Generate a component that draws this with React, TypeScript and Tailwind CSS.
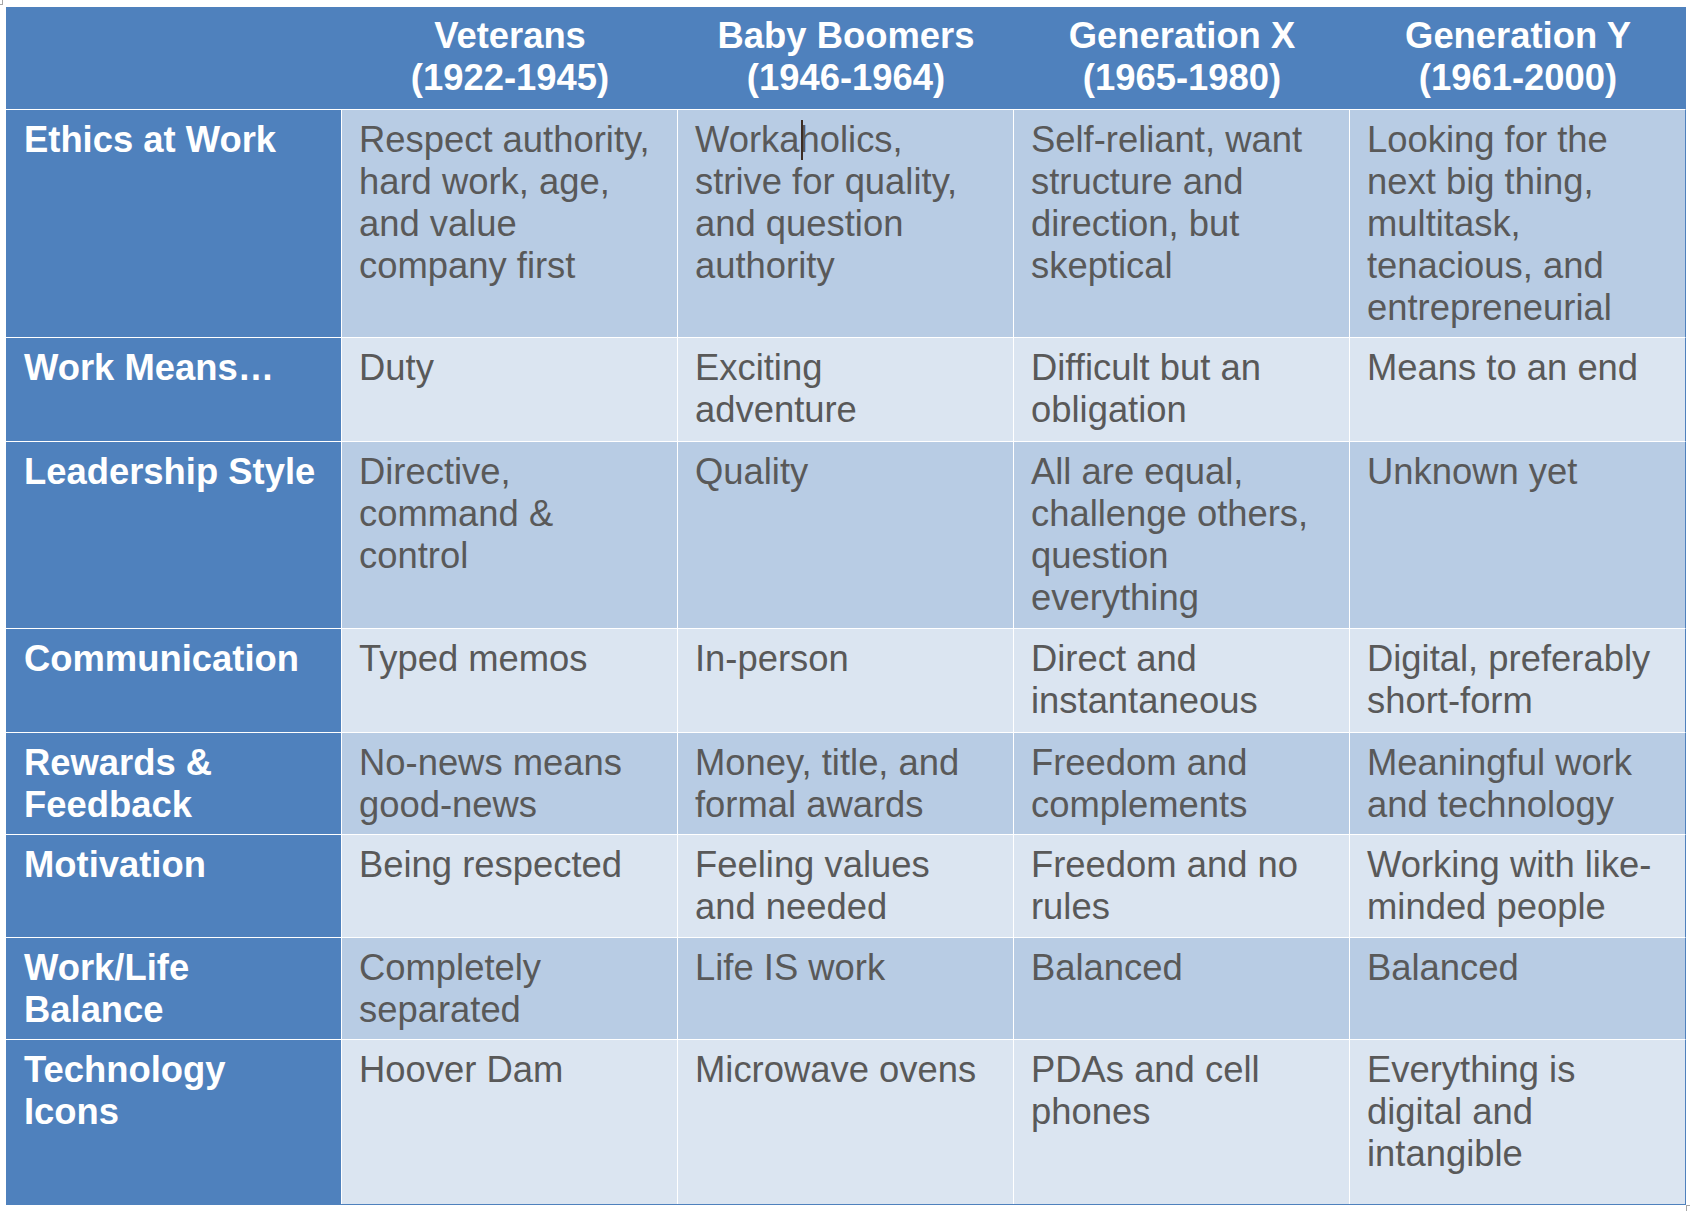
import React from "react";

const generations = [
  { name: "Veterans", years: "(1922-1945)" },
  { name: "Baby Boomers", years: "(1946-1964)" },
  { name: "Generation X", years: "(1965-1980)" },
  { name: "Generation Y", years: "(1961-2000)" },
];

interface Row {
  label: string;
  values: React.ReactNode[];
  height: string;
  tone: string;
}

const rows: Row[] = [
  {
    label: "Ethics at Work",
    values: [
      "Respect authority, hard work, age, and value company first",
      <>
        Worka
        <span className="relative">
          <span className="absolute left-[2px] top-[1px] h-[40px] w-[2px] bg-[#3d2c22]" />
        </span>
        holics, strive for quality, and question authority
      </>,
      "Self-reliant, want structure and direction, but skeptical",
      "Looking for the next big thing, multitask, tenacious, and entrepreneurial",
    ],
    height: "h-[228px]",
    tone: "bg-[#b8cce4]",
  },
  {
    label: "Work Means…",
    values: ["Duty", "Exciting adventure", "Difficult but an obligation", "Means to an end"],
    height: "h-[104px]",
    tone: "bg-[#dbe5f1]",
  },
  {
    label: "Leadership Style",
    values: [
      "Directive, command & control",
      "Quality",
      "All are equal, challenge others, question everything",
      "Unknown yet",
    ],
    height: "h-[187px]",
    tone: "bg-[#b8cce4]",
  },
  {
    label: "Communication",
    values: ["Typed memos", "In-person", "Direct and instantaneous", "Digital, preferably short-form"],
    height: "h-[104px]",
    tone: "bg-[#dbe5f1]",
  },
  {
    label: "Rewards & Feedback",
    values: [
      "No-news means good-news",
      "Money, title, and formal awards",
      "Freedom and complements",
      "Meaningful work and technology",
    ],
    height: "h-[102px]",
    tone: "bg-[#b8cce4]",
  },
  {
    label: "Motivation",
    values: [
      "Being respected",
      "Feeling values and needed",
      "Freedom and no rules",
      "Working with like-minded people",
    ],
    height: "h-[103px]",
    tone: "bg-[#dbe5f1]",
  },
  {
    label: "Work/Life Balance",
    values: ["Completely separated", "Life IS work", "Balanced", "Balanced"],
    height: "h-[102px]",
    tone: "bg-[#b8cce4]",
  },
  {
    label: "Technology Icons",
    values: ["Hoover Dam", "Microwave ovens", "PDAs and cell phones", "Everything is digital and intangible"],
    height: "h-[166px] border-b border-b-[#4f81bd]",
    tone: "bg-[#dbe5f1]",
  },
];

export default function App() {
  return (
    <div className="relative min-h-screen bg-white pl-[6px] pt-[7px] font-['Liberation_Sans',Arial,sans-serif] text-[36.4px] leading-[42px]">
      {/* page corner marks */}
      <div className="absolute left-0 top-0 h-[5px] w-[3px] border-b border-r border-[#a6a6a6]" />
      <div className="absolute left-[1686px] top-[1205px] h-[6px] w-[4px] border-l border-t border-[#a6a6a6]" />

      <div className="w-[1680px]">
        <div className="grid h-[102px] grid-cols-[336px_repeat(4,336px)] bg-[#4f81bd] font-bold text-white">
          <div />
          {generations.map((g) => (
            <div key={g.name} className="pt-[8px] text-center">
              <div>{g.name}</div>
              <div>{g.years}</div>
            </div>
          ))}
        </div>

        {rows.map((row) => (
          <div
            key={row.label}
            className={`grid grid-cols-[335px_repeat(4,335px)] gap-x-px border-t border-r border-t-white border-r-[#4f81bd] bg-white ${row.height}`}
          >
            <div className="bg-[#4f81bd] pl-[18px] pr-[18px] pt-[9px] font-bold text-white">{row.label}</div>
            {row.values.map((v, i) => (
              <div key={i} className={`${row.tone} pl-[17px] pr-[21px] pt-[9px] text-[#595959]`}>
                {v}
              </div>
            ))}
          </div>
        ))}
      </div>
    </div>
  );
}
